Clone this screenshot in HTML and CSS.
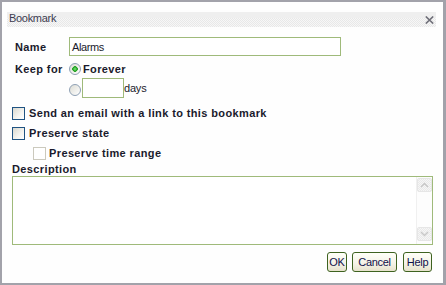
FILE: index.html
```html
<!DOCTYPE html>
<html>
<head>
<meta charset="utf-8">
<link rel="stylesheet" href="styles.css">
</head>
<body>
<div class="dialog">
  <div class="titlebar">
    <span class="title">Bookmark</span>
    <svg class="close" width="9" height="8" viewBox="0 0 9 8"><path d="M0.8 0.5 L8.2 7.5 M8.2 0.5 L0.8 7.5" stroke="#6e6e78" stroke-width="1.6" fill="none"/></svg>
  </div>
  <div class="form">
    <div class="grid">
      <div class="lbl">Name</div>
      <div class="field"><span class="input name-input">Alarms</span></div>
      <div class="lbl r2">Keep for</div>
      <div class="field r2"><span class="radio checked"></span><span class="opt">Forever</span></div>
      <div></div>
      <div class="field r3"><span class="radio low"></span><span class="input days-input"></span><span class="unit">days</span></div>
    </div>
    <div class="checks">
      <div class="check-row"><span class="cb"></span><span class="cb-label">Send an email with a link to this bookmark</span></div>
      <div class="check-row"><span class="cb"></span><span class="cb-label">Preserve state</span></div>
      <div class="check-row sub"><span class="cb disabled"></span><span class="cb-label">Preserve time range</span></div>
    </div>
    <div class="desc-label">Description</div>
    <div class="textarea">
      <div class="ta-content"></div>
      <div class="scrollbar">
        <span class="sb-btn"><svg width="9" height="6" viewBox="0 0 9 6"><path d="M1 5 L4.5 1.5 L8 5" stroke="#c8c8c8" stroke-width="1.5" fill="none"/></svg></span>
        <span class="sb-btn"><svg width="9" height="6" viewBox="0 0 9 6"><path d="M1 1 L4.5 4.5 L8 1" stroke="#c8c8c8" stroke-width="1.5" fill="none"/></svg></span>
      </div>
    </div>
    <div class="buttons">
      <button class="btn btn-ok">OK</button>
      <button class="btn btn-cancel">Cancel</button>
      <button class="btn btn-help">Help</button>
    </div>
  </div>
</div>
</body>
</html>
```
FILE: styles.css
```css
html, body {
  margin: 0;
  padding: 0;
  background: #fff;
}
.dialog {
  box-sizing: border-box;
  width: 446px;
  height: 285px;
  border: 2px solid #a2a2aa;
  border-right-width: 3px;
  background: #fefefe;
  padding: 10px 7px 0 5px;
  font-family: "Liberation Sans", Arial, sans-serif;
  font-size: 11px;
  color: #1a1a2c;
}
.titlebar {
  height: 15px;
  display: flex;
  align-items: center;
  justify-content: space-between;
  background:
    linear-gradient(#efefef 0 6px, transparent 6px),
    repeating-conic-gradient(#e8e8e8 0 25%, #f7f7f7 0 50%) 0 0 / 2px 2px;
}
.title {
  padding-left: 2px;
  line-height: 13px;
  padding-bottom: 2px;
  color: #3c3c50;
  letter-spacing: -0.3px;
}
.close {
  display: block;
  margin-right: 2px;
}
.form {
  padding: 0 3px 0 5px;
}
.grid {
  margin-top: 10px;
  padding-left: 3px;
  display: grid;
  grid-template-columns: 54px 1fr;
  grid-template-rows: 19px 22px 20px;
}
.lbl {
  font-weight: bold;
  letter-spacing: 0.38px;
  display: flex;
  align-items: center;
}
.field {
  display: flex;
  align-items: center;
}
.r2 {
  padding-top: 3px;
}
.input {
  box-sizing: border-box;
  border: 1px solid #9fba7a;
  background: #fff;
  display: flex;
  align-items: center;
  padding-left: 2px;
  letter-spacing: -0.4px;
  color: #1a1a2c;
}
.name-input {
  width: 272px;
  height: 19px;
}
.days-input {
  width: 42px;
  height: 20px;
}
.radio {
  box-sizing: border-box;
  width: 12px;
  height: 12px;
  border-radius: 50%;
  border: 1px solid #8ea0b4;
  background: linear-gradient(135deg, #dcdcd4, #ffffff);
  flex: none;
}
.radio.checked {
  background:
    radial-gradient(circle, #5fd05f 0 1px, #21a121 2px, #2aa52a 2.6px, transparent 3px),
    linear-gradient(135deg, #dcdcd4, #ffffff);
}
.radio.low {
  align-self: flex-end;
  margin-bottom: 2px;
  margin-right: 1px;
}
.opt {
  margin-left: 2px;
  font-weight: bold;
  letter-spacing: 0.38px;
}
.unit {
  letter-spacing: -0.2px;
}
.checks {
  margin-top: 5px;
}
.check-row {
  height: 20px;
  display: flex;
  align-items: center;
  gap: 4px;
}
.check-row.sub {
  padding-left: 21px;
  gap: 3px;
}
.cb {
  box-sizing: border-box;
  width: 13px;
  height: 13px;
  border: 1px solid #1f5382;
  background: linear-gradient(135deg, #d8d8d0, #f4f4f0 60%, #ffffff);
  flex: none;
}
.cb.disabled {
  border-color: #cbc9bd;
  background: #fff;
}
.cb-label {
  font-weight: bold;
  letter-spacing: 0.38px;
}
.desc-label {
  height: 13px;
  line-height: 12px;
  font-weight: bold;
  letter-spacing: 0.38px;
}
.textarea {
  box-sizing: border-box;
  width: 421px;
  height: 69px;
  border: 1px solid #9fba7a;
  background: #fff;
  display: flex;
}
.ta-content {
  flex: 1;
}
.scrollbar {
  width: 16px;
  box-sizing: border-box;
  border-left: 1px solid #f0f0f0;
  padding: 1px 0 3px 0;
  display: flex;
  flex-direction: column;
  justify-content: space-between;
  align-items: center;
  background: #fdfdfd;
}
.sb-btn {
  box-sizing: border-box;
  width: 15px;
  height: 14px;
  border: 1px solid #e6e6e6;
  border-radius: 2px;
  display: flex;
  align-items: center;
  justify-content: center;
  background: repeating-conic-gradient(#e9e9e9 0 25%, #f6f6f6 0 50%) 0 0 / 2px 2px;
}
.sb-btn svg {
  display: block;
}
.buttons {
  margin-top: 7px;
  padding-right: 1px;
  display: flex;
  justify-content: flex-end;
}
.btn {
  box-sizing: border-box;
  height: 20px;
  padding: 0;
  border: 1px solid #3e6220;
  border-radius: 3px;
  background: linear-gradient(#fffff8, #f4f2e6 60%, #e6e2cc);
  font-family: "Liberation Sans", Arial, sans-serif;
  font-size: 11px;
  letter-spacing: -0.3px;
  color: #10104a;
  text-align: center;
}
.btn-ok { width: 20px; }
.btn-cancel { width: 45px; margin-left: 5px; }
.btn-help { width: 29px; margin-left: 6px; }
```
